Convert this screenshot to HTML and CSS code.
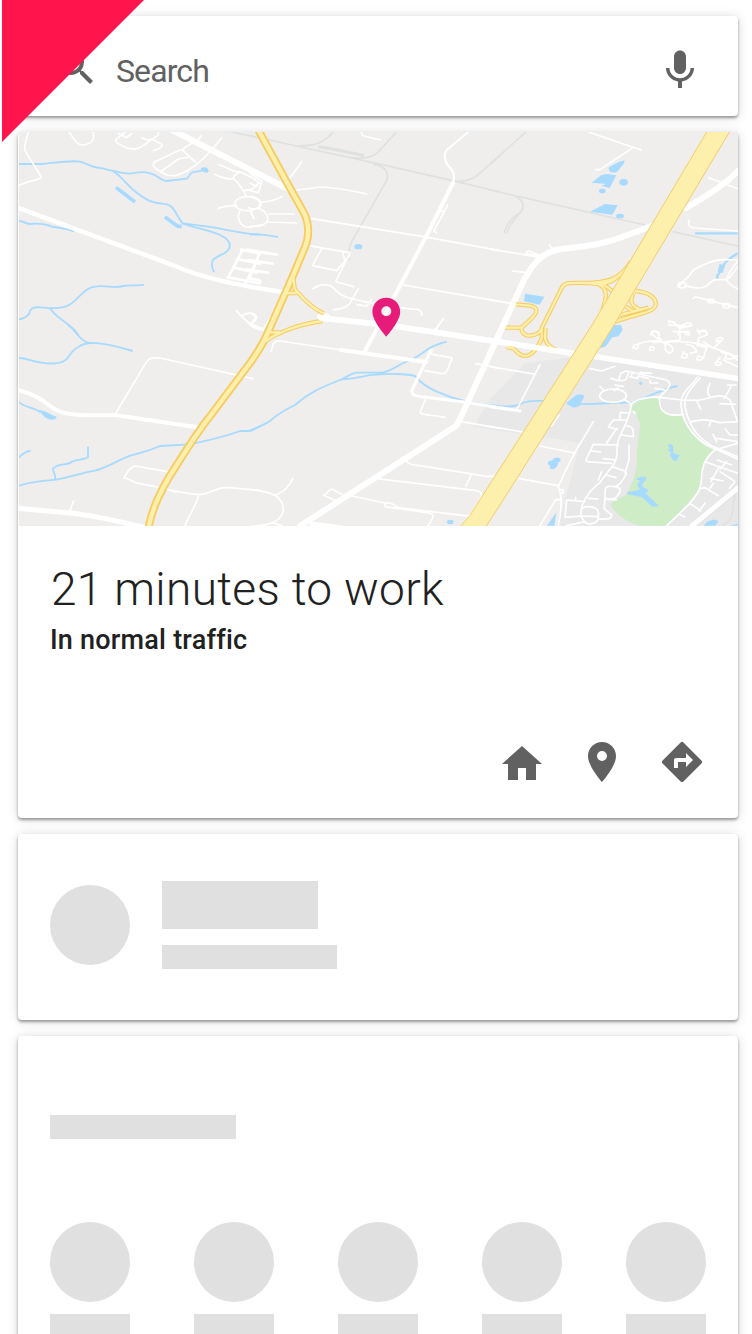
FILE: index.html
```html
<!DOCTYPE html>
<html lang="en">
<head>
<meta charset="utf-8">
<title>Commute</title>
<link rel="stylesheet" href="styles.css">
</head>
<body>
<main class="screen">
  <section class="card search">
    <svg class="icon" viewBox="0 0 24 24"><path d="M15.5 14h-.79l-.28-.27A6.471 6.471 0 0 0 16 9.5 6.5 6.5 0 1 0 9.5 16c1.61 0 3.09-.59 4.23-1.57l.27.28v.79l5 4.99L20.49 19l-4.99-5zm-6 0C7.01 14 5 11.99 5 9.5S7.01 5 9.5 5 14 7.01 14 9.5 11.99 14 9.5 14z"/></svg>
    <span class="search-label">Search</span>
    <svg class="icon mic" viewBox="0 0 24 24"><path d="M12 14c1.66 0 3-1.34 3-3V5.300c0-1.66-1.34-3-3-3S9 3.640 9 5.300v5.700c0 1.66 1.34 3 3 3zm5.3-3c0 3-2.54 5.1-5.3 5.1S6.700 14 6.700 11H5c0 3.410 2.720 6.230 6 6.720V21h2v-3.280c3.280-.480 6-3.300 6-6.720h-1.700z"/></svg>
  </section>

  <section class="card commute">
    <svg class="map" viewBox="19 132 719 394">
      <rect class="land" x="19" y="132" width="719" height="394"/>

      <!-- districts and park -->
      <g class="tile-f">
        <path class="urban" d="M105 115L300 90L743 165V602H205L270 353L-50 305L0 222Z"/>
        <path class="park" d="M425 245C440 225 470 217 508 220C510 255 530 275 575 272C590 305 620 355 673 377C625 415 645 450 625 495C600 530 560 570 530 602H450C405 590 370 560 362 537C370 525 395 520 410 508C430 470 440 440 440 410C440 365 450 320 450 295C440 280 440 255 425 255Z"/>
      </g>

      <!-- railways -->
      <g class="rail">
        <g class="tile-a"><path d="M665 21L750 40"/></g>
        <g class="tile-c">
          <path d="M0 32L180 72L410 122L620 170L750 201M250 21C215 60 190 63 130 63M440 21L385 80C370 98 340 102 300 98M370 118C405 122 417 140 410 167L305 350C296 370 295 385 298 405M620 170C655 168 675 160 695 140L750 92"/>
          <path class="wide" d="M205 65C250 70 290 80 342 92"/>
        </g>
        <g class="tile-e"><path d="M0 117L108 21M0 195L465 300M548 320L743 363M75 213C100 225 105 245 92 262C70 275 50 295 42 325M92 262C78 278 60 295 50 325"/></g>
        <g class="tile-f"><path d="M735 510C728 535 728 560 725 575C718 590 705 598 695 602M743 500L618 602"/></g>
      </g>

      <!-- streams -->
      <g class="stream">
        <g class="tile-a">
          <path d="M27 117H95C130 114 185 105 210 110C230 116 245 126 263 128C290 132 325 143 360 146C385 142 400 137 430 148C447 155 455 168 470 168L530 161C540 155 537 145 548 142L590 134M310 139C350 165 350 190 410 223C440 240 465 233 480 242C495 250 500 275 518 295C570 302 610 305 640 313C690 322 720 328 750 329M518 295C560 312 610 315 640 335C665 350 665 370 645 383C625 395 605 400 606 415C604 427 610 434 612 442M27 288C42 288 43 297 60 297C90 294 105 296 125 305C150 310 160 307 192 319M27 583C40 580 50 578 58 565C59 552 68 545 90 547C120 549 160 555 185 535C215 512 225 486 260 484C295 480 310 492 340 483C365 478 385 484 402 479M120 550C145 588 180 590 205 630"/>
          <path class="pond-bar" d="M318 187L375 231M465 276L503 304H515"/>
        </g>
        <g class="tile-b"><path d="M173 0C195 10 205 45 235 54C280 52 325 65 368 78M27 99C50 98 65 112 110 115C190 120 165 85 205 66C215 59 228 54 245 54M27 230C40 248 70 245 92 262M27 398C35 387 50 380 62 377M27 482C50 475 75 468 138 464C175 458 210 445 255 437C290 428 320 408 360 392C395 382 420 377 450 363L540 358C600 345 640 337 690 318H720C735 314 742 307 750 303M135 464C139 447 127 440 129 431C145 412 172 423 184 411C198 402 225 405 234 396V365"/></g>
        <g class="tile-c"><path d="M0 329C35 325 55 331 84 336"/></g>
        <g class="tile-d"><path d="M0 317C25 306 42 300 60 288C85 265 110 252 135 240C180 200 220 185 275 163C300 150 310 143 320 143H395C430 137 440 120 475 108C525 90 515 70 590 50M275 163C340 160 340 145 440 147C480 148 495 150 500 158C525 190 590 215 640 227C675 238 710 238 750 243"/></g>
        <g class="tile-e"><path d="M615 325H743M743 385C722 398 705 408 695 430C695 445 675 447 683 461" stroke-width="7"/></g>
        <g class="tile-f"><path d="M0 241C30 245 62 247 85 240C110 225 135 227 165 228M235 235C300 242 340 232 425 233C480 215 520 190 563 183"/></g>
      </g>

      <!-- ponds -->
      <g class="water">
        <g class="tile-a"><path d="M573 130C585 121 600 133 595 142C583 145 573 139 573 130Z"/></g>
        <g class="tile-b"><path d="M85 255C105 255 117 268 140 275C137 290 110 284 101 273Z"/></g>
        <g class="tile-c"><ellipse cx="325" cy="365" rx="12" ry="8"/></g>
        <g class="tile-d"><ellipse cx="601" cy="591" rx="10" ry="7"/></g>
        <g class="tile-e"><path d="M404 106L401 116L381 140C365 148 352 136 357 127L384 112ZM305 173L333 151L352 147L379 151L359 189L333 182L349 177ZM300 260L345 237L383 241L367 269ZM105 506L163 515L149 539L102 529ZM689 416L704 424L698 444L683 440Z"/><ellipse cx="401" cy="172" rx="13" ry="10"/><ellipse cx="337" cy="198" rx="10" ry="7"/><ellipse cx="390" cy="273" rx="12" ry="7"/></g>
        <g class="tile-f"><path d="M372 0H393L398 15L385 34L367 37L346 65L329 70ZM228 235L258 211C270 207 280 209 283 214L269 242C253 252 245 248 228 235ZM174 411C183 403 190 409 191 400C205 393 215 400 211 409C197 415 210 421 192 432C178 435 177 427 182 421C174 421 173 416 174 411ZM533 360C545 355 552 360 549 370C553 378 545 383 553 386L569 389L559 409L548 405C543 400 548 397 542 395C535 390 545 386 542 380C531 379 533 373 540 371ZM437 462C450 455 464 453 470 458C466 470 453 479 458 486L476 495C470 501 465 507 472 510L507 543L487 545L456 517L425 510C415 509 410 506 412 501L445 496L450 490C438 482 440 474 451 468ZM171 602L199 562L193 602ZM642 602C650 585 678 578 685 590L675 602ZM720 602L743 596V602Z"/><circle cx="452" cy="175" r="5"/></g>
      </g>

      <!-- local streets -->
      <g class="street">
        <g class="tile-a"><path d="M55 21C50 40 43 60 44 74C60 105 80 130 93 155C95 165 65 164 27 181M177 21C195 45 200 62 220 60C250 56 254 42 249 21M345 21L320 42C310 50 325 57 350 69C370 75 385 72 395 65L445 30V21M325 25L350 38L365 25M395 38L410 45L425 42L455 58C460 68 445 70 431 77M510 75L435 110C425 120 430 125 440 132C460 145 470 155 500 151C550 135 590 95 635 38M455 138L505 102L535 96M555 110L520 78C517 60 560 58 573 33M510 75H520M625 120C650 122 670 145 690 140L730 160L750 175M614 148C640 160 655 165 670 160C673 145 687 145 690 140M670 160C690 178 700 195 710 215M745 175C730 190 723 197 703 197M625 250C645 242 660 243 680 241M690 256C678 280 690 307 720 307L750 300M721 260L732 280"/><ellipse cx="712" cy="236" rx="38" ry="21"/><path class="medium" d="M693 374L750 386M681 402L750 416M670 427L740 443M653 457L750 475M698 374L656 455M742 405L704 480"/><path d="M678 557L725 603L750 616M693 574C710 562 732 560 740 575L728 592"/></g>
        <g class="tile-b"><path d="M317 265L410 110C420 97 430 98 450 99L728 161M485 442L375 423C362 425 353 440 342 459C360 460 365 472 385 475C445 484 530 511 575 508C600 505 620 488 650 487L750 496M485 498L497 503L500 498M565 513C562 535 540 565 525 602M178 560L191 528"/></g>
        <g class="tile-c"><path d="M0 145L35 168L25 203L-10 194M0 175L20 184M155 110C143 130 130 144 118 160M140 195C180 192 200 185 225 186C260 190 300 195 350 207M97 214C75 228 55 230 34 231M0 215C25 215 37 231 31 244C20 258 0 250 -5 248M25 250C50 260 60 280 48 293C35 305 15 305 0 303M3 258L11 279M57 267H132M50 291L140 294M180 280L520 335L750 377M175 362L300 383L257 470L311 485M215 372L187 422L260 437L298 393M278 380L285 410M335 21C330 35 350 34 391 45M593 240L552 317L559 323M568 257L583 260M188 491C225 470 245 479 258 497C280 520 310 521 340 529L370 535M325 492L305 525C295 550 275 550 250 555M365 523L350 543L321 539M460 480L750 529M430 545L490 553C510 550 517 560 515 571M580 582L557 612V630M750 610L738 630M0 595L40 612L60 580M0 565C15 570 24 583 12 589L0 597"/><path class="medium" d="M-10 374L80 389M-5 405L68 416M-10 433L54 443M0 460L31 467M27 389L0 455"/><path class="collector" d="M655 21L590 75C580 90 582 105 593 120C612 140 615 150 610 170"/></g>
        <g class="tile-d"><path d="M63 80L70 57C75 45 85 47 110 51L275 75M0 0C20 10 30 13 40 15M0 159L9 161M545 88L600 97C610 97 605 105 600 115C592 138 588 147 575 146L525 137M545 74V88M678 116L750 130M527 222L511 260C507 271 540 268 585 277M630 289L750 310M463 403C475 415 480 420 510 422L710 454H735M663 451L648 483M375 460L680 497C700 502 695 515 690 525L660 572H645L445 548C440 548 430 530 405 534C405 548 405 545 425 548L535 564C555 567 550 575 545 585L535 602M305 513L405 534M256 526L220 511C240 500 236 490 247 493L285 513M0 493C60 500 100 510 100 555C98 575 85 587 65 595C45 600 20 602 0 605M78 511C105 497 118 485 128 461M65 593L95 602M557 18L566 0"/></g>
        <g class="tile-e"><path d="M295 21L453 75M429 68L330 134H316M656 158L743 191M597 286C592 300 600 309 615 309L743 318M0 372L150 397M108 382L115 378L148 390L125 389L110 385M178 360L186 370M68 438L105 442M0 525L65 535M568 484C575 465 590 470 610 435C640 418 675 403 700 403L743 405M585 482C620 490 630 492 650 483C665 470 665 464 680 464H710M743 410C730 425 712 445 710 464C715 478 728 483 743 492M743 425L717 460"/><ellipse cx="576" cy="481" rx="12" ry="8"/><path d="M610 520C615 510 625 520 635 520L670 530L743 548M550 590L570 610L565 630M482 630C485 615 510 617 508 630M540 595C525 580 550 590 560 600M572 605C590 590 605 592 605 602L572 610M635 620C640 610 653 617 650 630"/><ellipse cx="663" cy="528" rx="10" ry="6"/><ellipse cx="709" cy="542" rx="10" ry="7"/></g>
        <g class="tile-f"><path d="M430 70C425 58 445 55 445 65L440 72L430 67M440 60C465 44 490 48 530 52C600 42 665 62 743 97M480 72C476 60 500 65 490 75L478 76M490 48L515 45C480 30 480 20 492 17C513 22 505 35 510 45M490 52L525 50M520 53C550 60 555 75 540 85C525 82 525 70 525 50M530 50L570 45V0M550 20H597M535 0L600 4M570 22C585 20 600 20 598 30L585 27M582 80L574 97C590 105 600 89 585 86M600 85L620 80C610 60 600 60 590 58M620 60L650 68L640 100C625 110 615 105 625 92L640 99M640 50L670 70L698 43C695 33 675 38 680 50L690 47M624 20C640 15 655 20 650 30L625 40V53M622 15L630 28M690 98L675 115C680 125 695 122 693 112L680 111M693 80L710 87L705 100C723 107 742 95 743 92M700 105L743 125M650 60L720 88L743 105"/>
        <path d="M0 125L131 147M150 119L90 235C80 255 75 256 62 256L0 247M0 304L97 321M150 363L253 384M85 460L205 482M207 270L185 303M310 290L255 382L230 430L205 485C218 515 215 555 205 602M208 494C225 490 225 506 210 507M210 524H197L150 602M300 131L335 138L375 124M363 160L385 167L393 145L408 138L530 165C545 175 540 185 530 195L510 215M415 145L410 160C405 168 400 168 375 165M420 155L443 160L445 153L475 160M450 142L485 145M424 150L430 141M480 165V174H503M375 180L400 184M385 188L373 197M330 185L340 195M495 190L525 195"/><ellipse cx="369" cy="212" rx="40" ry="20"/>
        <path d="M405 225L425 237L420 260L410 290L385 345C375 375 390 390 370 420L330 472C310 490 290 505 275 545M418 264L391 262L389 282M410 285H370L355 306L382 313M430 260L436 265M380 310L350 354M410 303C430 303 430 315 430 335L395 330M385 360L310 358L290 400C285 410 293 411 305 411L365 415M305 378L332 381M340 401L378 405M417 360V405L408 435V450M365 425L405 438L407 450C395 470 390 480 375 485C345 480 345 490 345 500V525L342 550L365 570C365 585 350 582 325 582M335 440L325 465M347 450L378 458M375 485C400 490 390 505 375 520L355 525M345 520L380 525M285 530L230 525L225 577L275 573M257 517V525M295 520L325 522M275 550C290 540 320 545 325 560V582C315 600 290 602 280 585C270 575 272 565 275 550M275 573L325 575M230 602L285 590M420 240C440 220 480 215 510 217L575 225L625 226C665 220 690 200 720 225L743 290M508 220C507 260 530 277 580 268M622 156C610 180 577 195 573 230C572 290 610 335 650 360L743 402M630 158C600 195 584 210 584 240C595 300 620 335 665 362L743 395M660 175C645 200 657 210 660 216M620 227L632 252M713 180H738M725 182L703 220M690 236L736 238M605 290C640 280 655 285 690 293L743 290M665 285L657 303M706 312L720 330H743M669 328L680 350M680 340L743 350M675 375L743 355M675 375C645 400 640 415 635 450C635 495 620 510 595 540L530 602M645 410L743 445M682 405L725 420M710 410L690 432M661 460L700 468M685 430L663 470M690 440L735 470L718 490M630 490L645 488L685 512M660 490L670 475M599 535L632 557M645 535L627 558M565 567L584 575"/></g>
      </g>

      <!-- arterial roads -->
      <g class="road">
        <path d="M170 129L290 190" stroke-width="6"/>
        <path d="M19 208L175 266C200 277 230 284 282 292" stroke-width="4.500"/>
        <path d="M19 390.500C55 399 43 415 85 415H115L202 428" stroke-width="4"/>
        <path d="M19 508.500L70 513C100 516 130 524 155 530" stroke-width="5"/>
        <path d="M321 318L387 325L493 341L738 378.500" stroke-width="5.500"/>
        <path d="M321 317.500H326" stroke-width="8"/>
        <path d="M453 183L430 229L393 299L365 351M341 350L426 362" stroke-width="4"/>
        <path d="M431 350L412 390C411 395 414 396 424 397L464 402L520 411" stroke-width="3"/>
        <path d="M738 171C725 184 713 192 686 208M660 223L630 234C602 246 577 247 560 249C537 254 530 270 524 280L460 419L456 426L300 526" stroke-width="6"/>
        <path d="M312 524L342 528M738 488L692 526" stroke-width="5"/>
      </g>

      <!-- ramps and interchange -->
      <g class="ramp">
        <g class="tile-c"><path d="M130 455L134 492C150 508 175 545 222 566M110 504H140M55 622L95 622C135 605 160 597 218 588M45 650C60 640 65 632 95 622"/></g>
        <g class="tile-e"><path d="M78 538L120 542C145 548 145 560 125 580L95 608H45M95 608C92 620 105 634 120 632C140 630 150 625 155 610L216 487C225 470 240 474 300 474C350 470 390 465 423 410M155 610L155 640C135 690 105 710 75 675C72 667 65 670 50 666M167 610L165 635C165 655 185 670 200 675M325 478C360 490 345 530 338 555M300 474C350 485 380 465 410 430M340 478L370 500M435 498C470 500 500 515 497 540C490 565 440 565 375 590M430 505C417 530 425 545 455 556M408 545L430 560M390 570L475 548"/></g>
        <path d="M258.300 130L288.300 185L303.300 211.700C310 224 309 238 305 247L293.300 275L268.300 331.700C264 342 258 352 250 363L210 416.300C198 431 187 449 176.700 465C160 490 151 513 148.300 529"/>
      </g>
      <g class="ramp-fill">
        <g class="tile-c"><path d="M130 455L134 492C150 508 175 545 222 566M110 504H140M55 622L95 622C135 605 160 597 218 588M45 650C60 640 65 632 95 622"/></g>
        <g class="tile-e"><path d="M78 538L120 542C145 548 145 560 125 580L95 608H45M95 608C92 620 105 634 120 632C140 630 150 625 155 610L216 487C225 470 240 474 300 474C350 470 390 465 423 410M155 610L155 640C135 690 105 710 75 675C72 667 65 670 50 666M167 610L165 635C165 655 185 670 200 675M325 478C360 490 345 530 338 555M300 474C350 485 380 465 410 430M340 478L370 500M435 498C470 500 500 515 497 540C490 565 440 565 375 590M430 505C417 530 425 545 455 556M408 545L430 560M390 570L475 548"/></g>
        <path d="M258.300 130L288.300 185L303.300 211.700C310 224 309 238 305 247L293.300 275L268.300 331.700C264 342 258 352 250 363L210 416.300C198 431 187 449 176.700 465C160 490 151 513 148.300 529"/>
      </g>
      <path class="road" d="M321 318L387 325L493 341L570 353" stroke-width="5.500"/>
      <path class="road" d="M505 322L490 353" stroke-width="6"/>
      <path class="highway" d="M707.300 131L592 325L490 484L470 515.500L460 527H485.500L500 505L614 325L730 131Z"/>

      <path class="pin" fill-rule="evenodd" d="M386.300 297.800C378.500 297.800 372.400 304 372.400 311.700C372.400 321.500 386.300 336.500 386.300 336.500S400.200 321.500 400.200 311.700C400.200 304 394 297.800 386.300 297.800ZM386.300 306.200A5 5 0 1 1 386.300 316.200A5 5 0 0 1 386.300 306.200Z"/>
    </svg>
    <div class="summary">
      <h1 class="title">21 minutes to work</h1>
      <p class="subtitle">In normal traffic</p>
    </div>
    <div class="actions">
      <svg class="icon home" viewBox="0 0 24 24"><path d="M10 20v-6h4v6h5v-8h3L12 3 2 12h3v8z"/></svg>
      <svg class="icon" viewBox="0 0 24 24"><path d="M12 2C8.130 2 5 5.130 5 9c0 5.250 7 13 7 13s7-7.750 7-13c0-3.870-3.130-7-7-7zm0 9.500a2.500 2.500 0 0 1 0-5 2.500 2.500 0 0 1 0 5z"/></svg>
      <svg class="icon" viewBox="0 0 24 24"><path d="M21.710 11.290l-9-9a.996.996 0 0 0-1.410 0l-9 9a.996.996 0 0 0 0 1.410l9 9c.390.390 1.020.390 1.410 0l9-9a.996.996 0 0 0 0-1.410zM14 14.500V12h-4v3H8v-4c0-.550.450-1 1-1h5V7.500l3.500 3.500-3.500 3.500z"/></svg>
    </div>
  </section>

  <section class="card contact">
    <div class="dot"></div>
    <div class="lines">
      <div class="block line-large"></div>
      <div class="block line-small"></div>
    </div>
  </section>

  <section class="card people">
    <div class="block heading"></div>
    <div class="person-row">
      <div class="person"><div class="dot"></div><div class="block name"></div></div>
      <div class="person"><div class="dot"></div><div class="block name"></div></div>
      <div class="person"><div class="dot"></div><div class="block name"></div></div>
      <div class="person"><div class="dot"></div><div class="block name"></div></div>
      <div class="person"><div class="dot"></div><div class="block name"></div></div>
    </div>
  </section>
  <div class="corner"></div>
</main>
</body>
</html>
```
FILE: styles.css
```css
* { box-sizing: border-box; }
body { margin: 0; background: #fff; font-family: Roboto, "Liberation Sans", sans-serif; }
.screen {
  position: relative;
  display: flex;
  flex-direction: column;
  gap: 16px;
  height: 1334px;
  padding: 16px 14px 0 18px;
  overflow: hidden;
}
.card {
  flex: none;
  background: #fff;
  border-radius: 4px;
  box-shadow: 0 2px 3px rgba(0, 0, 0, .36), 0 1px 12px rgba(0, 0, 0, .15);
}
.icon { display: block; flex: none; width: 48px; height: 48px; fill: #616161; }

.search { display: flex; align-items: center; height: 100px; padding: 0 34px; }
.search .icon { margin-top: 2px; }
.search .icon.mic { margin: 8px 0 0 auto; }
.search-label { margin-left: 16px; margin-top: 10px; color: #616161; font-size: 32px; letter-spacing: -.9px; }

.commute { height: 686px; }
.map { display: block; width: 719px; height: 394px; margin-left: 1px; }
.summary { height: 206px; padding: 34px 32px 0 33px; color: #212121; }
.title { margin: 0; font-size: 46px; font-weight: 300; line-height: 58px; letter-spacing: .33px; white-space: nowrap; }
.subtitle { margin: 6px 0 0 -1px; font-size: 27px; font-weight: 500; line-height: 32px; letter-spacing: .22px; }
.actions { display: flex; justify-content: flex-end; gap: 32px; padding: 6px 32px 0; }
.icon.home { margin-top: 2px; }

.dot { flex: none; width: 80px; height: 80px; border-radius: 50%; background: #e0e0e0; }
.block { background: #e0e0e0; }
.contact { display: flex; gap: 32px; height: 186px; padding: 47px 32px 0; }
.contact .dot { margin-top: 4px; }
.line-large { width: 156px; height: 48px; }
.line-small { width: 174.5px; height: 24px; margin-top: 16px; }
.people { height: 330px; padding: 79px 32px 0; }
.heading { width: 186px; height: 24px; }
.person-row { display: flex; justify-content: space-between; margin-top: 83px; }
.name { width: 80px; height: 32px; margin-top: 12px; }

.corner {
  position: absolute;
  left: 2px;
  top: 0;
  width: 142px;
  height: 142px;
  background: #ff154b;
  clip-path: polygon(0 0, 100% 0, 0 100%);
}

/* The map is drawn in six sections, each at three units per pixel. */
.tile-a { transform: translate(10px, 125px) scale(.33333); }
.tile-b { transform: translate(10px, 325px) scale(.33333); }
.tile-c { transform: translate(250px, 125px) scale(.33333); }
.tile-d { transform: translate(250px, 325px) scale(.33333); }
.tile-e { transform: translate(490px, 125px) scale(.33333); }
.tile-f { transform: translate(490px, 325px) scale(.33333); }
.land { fill: #efeeec; }
.urban { fill: #e8e8e8; }
.park { fill: #ceecc6; }
.water { fill: #a8daff; }
.rail, .stream, .street, .road, .ramp, .ramp-fill { fill: none; stroke-linejoin: round; }
.rail { stroke: #dfe1e0; stroke-width: 5px; }
.rail .wide { stroke-width: 9px; }
.stream { stroke: #a8daff; stroke-width: 5.5px; }
.stream .pond-bar { stroke-width: 11px; }
.street { stroke: #fff; stroke-width: 5px; stroke-linecap: round; }
.street .medium { stroke-width: 8px; }
.street .collector { stroke-width: 6.5px; }
.road { stroke: #fff; stroke-linecap: round; }
.ramp { stroke: #f6cb62; stroke-width: 8px; }
.ramp g { stroke-width: 13px; }
.ramp-fill { stroke: #feefab; stroke-width: 4.4px; }
.ramp-fill g { stroke-width: 7px; }
.highway { fill: #fdf0ad; stroke: #f5cd68; stroke-width: 1px; }
.pin { fill: #e61b7a; }
```
